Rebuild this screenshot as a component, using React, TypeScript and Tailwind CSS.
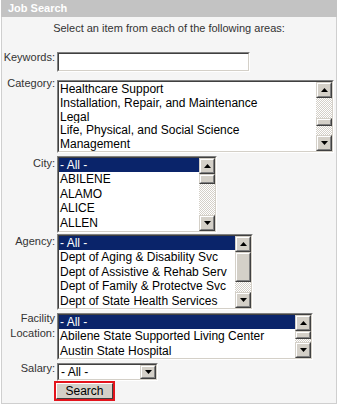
import React from "react";

const FONT = "font-['Liberation_Sans',Arial,sans-serif]";

function Arrow({ up }: { up?: boolean }) {
  return (
    <svg width="7" height="4" viewBox="0 0 7 4">
      {up ? <path d="M3.5 0 L7 4 L0 4 Z" fill="#000" /> : <path d="M0 0 L7 0 L3.5 4 Z" fill="#000" />}
    </svg>
  );
}

function ScrollButton({ up, h = 16 }: { up?: boolean; h?: number }) {
  return (
    <div
      className="w-[16px] shrink-0 bg-[#d4d0c8] border border-t-[#d4d0c8] border-l-[#d4d0c8] border-b-[#404040] border-r-[#404040]"
      style={{ height: h }}
    >
      <div className="w-full h-full border border-t-white border-l-white border-b-[#808080] border-r-[#808080] flex items-center justify-center">
        <Arrow up={up} />
      </div>
    </div>
  );
}

function Inset({ className, children }: { className: string; children: React.ReactNode }) {
  return (
    <div className={`border border-t-[#808080] border-l-[#808080] border-b-white border-r-white ${className}`}>
      <div className="w-full h-full border border-t-[#404040] border-l-[#404040] border-b-[#d4d0c8] border-r-[#d4d0c8] bg-white flex overflow-hidden">
        {children}
      </div>
    </div>
  );
}

type ListProps = {
  className: string;
  items: string[];
  selected?: number;
  thumbTop: number;
  thumbHeight: number;
};

function ListBox({ className, items, selected, thumbTop, thumbHeight }: ListProps) {
  return (
    <Inset className={className}>
      <div className="flex-1 min-w-0 flex flex-col">
        {items.map((it, i) => (
          <div
            key={it}
            className={`h-[14.4px] leading-[14.4px] pl-[1px] text-[12px] whitespace-nowrap overflow-hidden ${
              i === selected ? "bg-[#0a246a] text-white" : "text-black"
            }`}
          >
            {it}
          </div>
        ))}
      </div>
      <div className="w-[16px] flex flex-col">
        <ScrollButton up />
        <div className="flex-1 bg-[repeating-conic-gradient(#d4d0c8_0%_25%,#ffffff_0%_50%)] bg-size-[2px_2px] flex flex-col">
          <div style={{ height: thumbTop }} className="shrink-0" />
          <div
            className="shrink-0 bg-[#d4d0c8] border border-t-[#d4d0c8] border-l-[#d4d0c8] border-b-[#404040] border-r-[#404040]"
            style={{ height: thumbHeight }}
          >
            <div className="w-full h-full border border-t-white border-l-white border-b-[#808080] border-r-[#808080]" />
          </div>
        </div>
        <ScrollButton />
      </div>
    </Inset>
  );
}

function Row({ label, mt, labelMt, children }: { label: React.ReactNode; mt: string; labelMt: string; children: React.ReactNode }) {
  return (
    <div className={`flex items-start ${mt}`}>
      <div className={`w-[53px] shrink-0 text-right text-[11px] leading-[13px] text-[#333] ${labelMt}`}>{label}</div>
      <div className="ml-[2px]">{children}</div>
    </div>
  );
}

export default function App() {
  return (
    <div className={`w-[340px] h-[407px] bg-white ${FONT}`}>
      <div className="ml-[1px] w-[336px]">
        <div className="h-[17px] bg-[#c3c3c3] pl-[7px] text-[11px] leading-[17px] font-bold text-white">Job Search</div>
        <div className="h-[387px] bg-[#f5f5f5] border-l border-r border-b border-[#cfcfcf] flex flex-col">
          <div className="mt-[5px] text-center text-[11px] leading-[13px] text-[#333]">
            Select an item from each of the following areas:
          </div>

          <Row label="Keywords:" mt="mt-[17px]" labelMt="mt-[-1px]">
            <Inset className="w-[193px] h-[20px]">
              <div />
            </Inset>
          </Row>

          <Row label="Category:" mt="mt-[8px]" labelMt="mt-[-3px]">
            <ListBox
              className="w-[277px] h-[73px]"
              items={[
                "Healthcare Support",
                "Installation, Repair, and Maintenance",
                "Legal",
                "Life, Physical, and Social Science",
                "Management",
              ]}
              thumbTop={20}
              thumbHeight={8}
            />
          </Row>

          <Row label="City:" mt="mt-[3px]" labelMt="mt-[1px]">
            <ListBox
              className="w-[160px] h-[77px]"
              items={["- All -", "ABILENE", "ALAMO", "ALICE", "ALLEN"]}
              selected={0}
              thumbTop={0}
              thumbHeight={10}
            />
          </Row>

          <Row label="Agency:" mt="mt-[1px]" labelMt="mt-[1px]">
            <ListBox
              className="w-[196px] h-[76px]"
              items={[
                "- All -",
                "Dept of Aging & Disability Svc",
                "Dept of Assistive & Rehab Serv",
                "Dept of Family & Protectve Svc",
                "Dept of State Health Services",
              ]}
              selected={0}
              thumbTop={0}
              thumbHeight={30}
            />
          </Row>

          <Row
            label={
              <>
                Facility
                <br />
                Location:
              </>
            }
            mt="mt-[3px]"
            labelMt="mt-[-2px] leading-[15px]"
          >
            <ListBox
              className="w-[256px] h-[47px]"
              items={["- All -", "Abilene State Supported Living Center", "Austin State Hospital"]}
              selected={0}
              thumbTop={0}
              thumbHeight={8}
            />
          </Row>

          <Row label="Salary:" mt="mt-[3px]" labelMt="mt-[-1px]">
            <Inset className="w-[101px] h-[18px]">
              <div className="flex-1 pl-[2px] text-[12px] leading-[14px] text-black">- All -</div>
              <ScrollButton h={14} />
            </Inset>
          </Row>

          <Row label="" mt="mt-0" labelMt="">
            <div className="ml-[-3px] border-2 border-[#e3141c] w-[61px] h-[20px]">
              <div className="w-full h-full bg-[#d4d0c8] border border-t-white border-l-white border-b-[#404040] border-r-[#404040] flex items-center justify-center text-[12px] leading-[14px] text-black">
                Search
              </div>
            </div>
          </Row>
        </div>
      </div>
    </div>
  );
}
